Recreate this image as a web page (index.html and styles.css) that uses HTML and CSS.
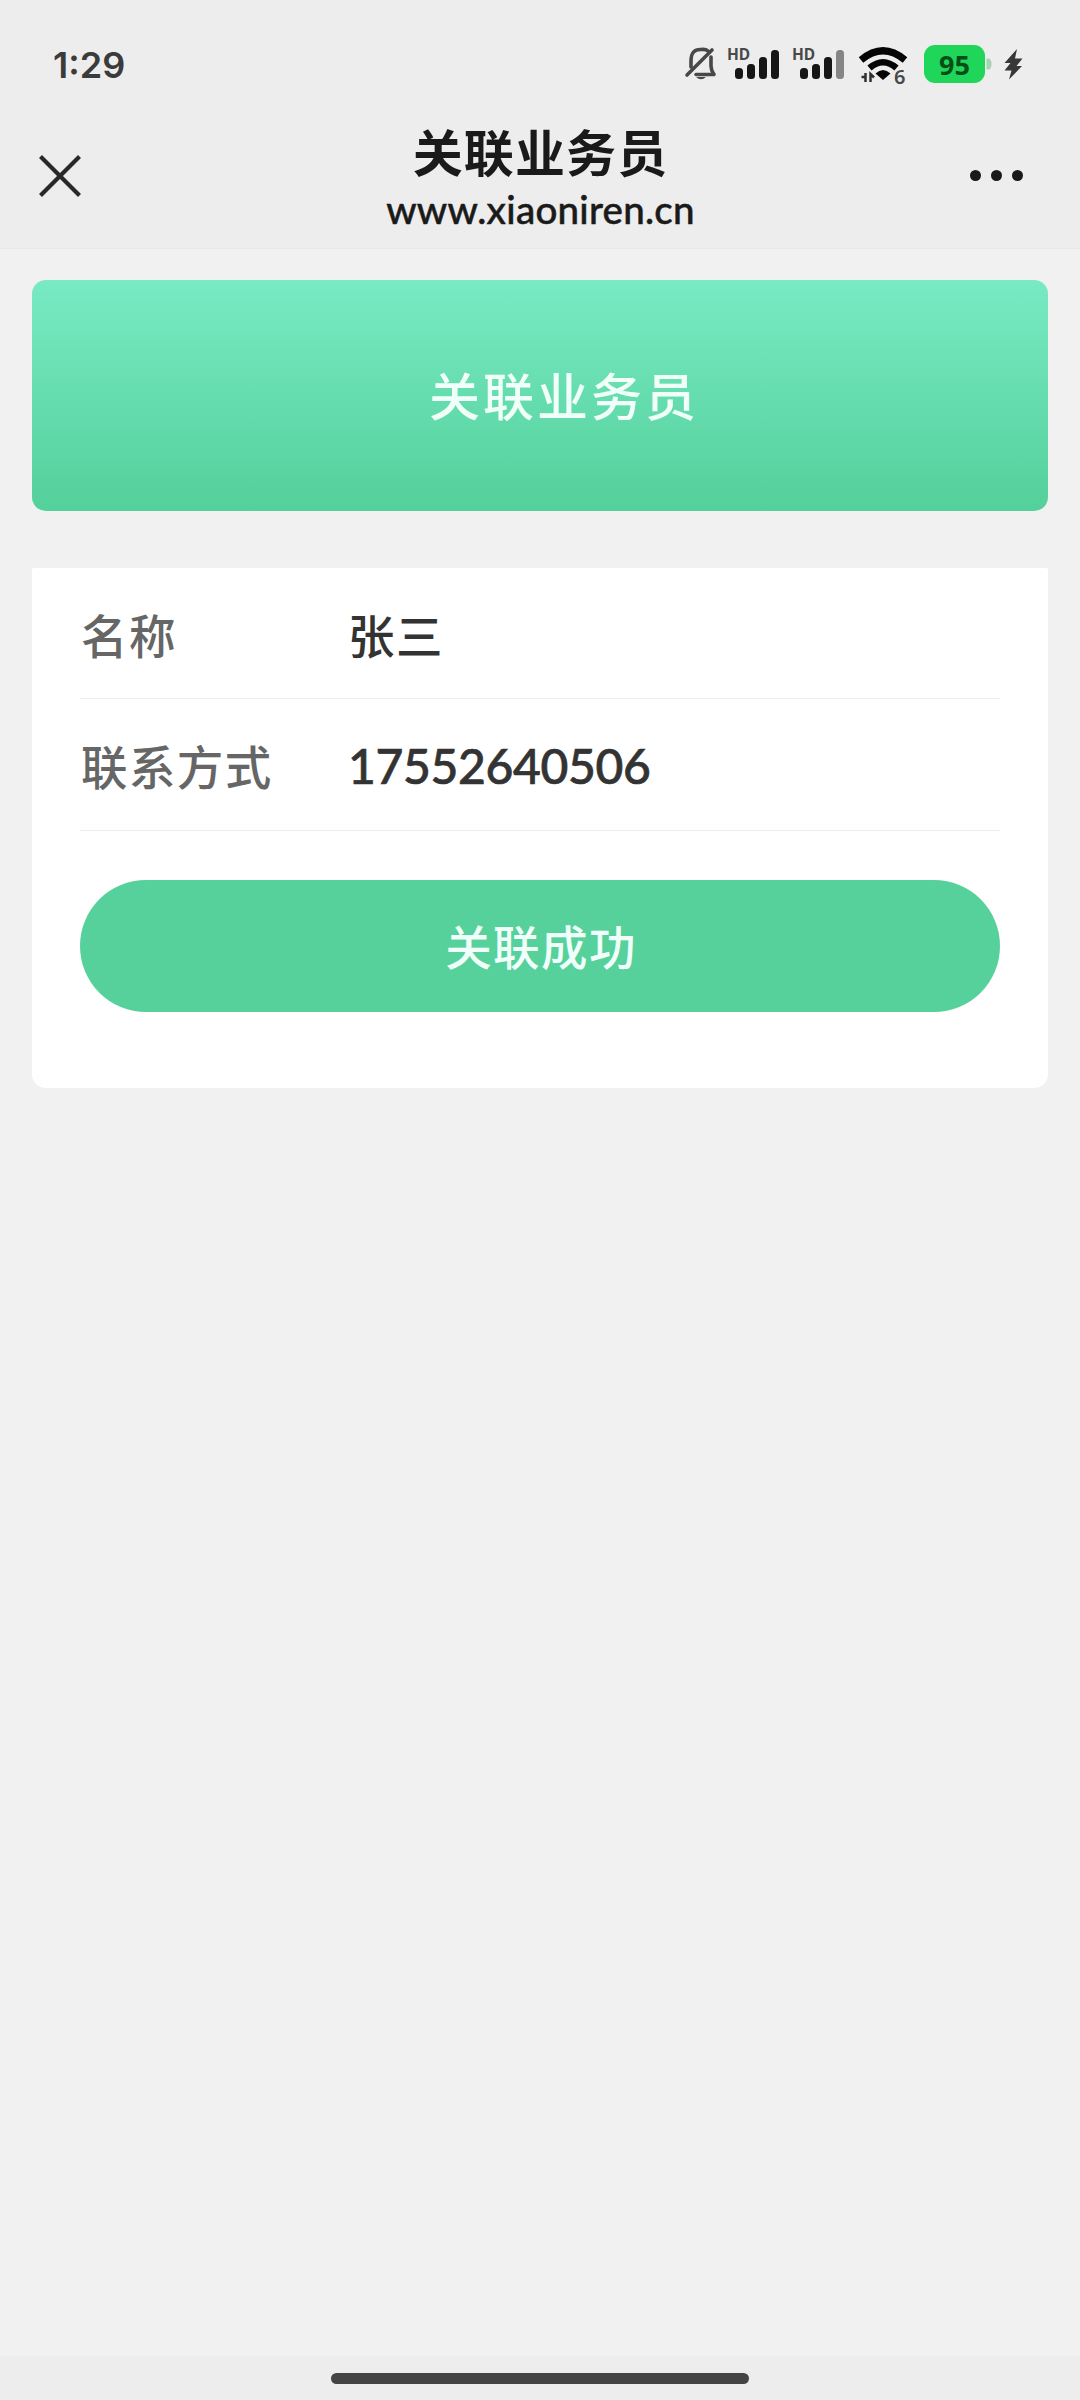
FILE: index.html
```html
<!DOCTYPE html>
<html lang="zh-CN">
<head>
<meta charset="utf-8">
<title>关联业务员</title>
<link rel="stylesheet" href="styles.css">
</head>
<body>
<div class="screen">
  <header class="top">
    <div class="status">
      <span class="time">1:29</span>
      <svg class="status-icons" width="380" height="60" viewBox="680 34 380 60">
        <g fill="none" stroke="#484848" stroke-width="3.6" stroke-linecap="round" stroke-linejoin="round">
          <path d="M687 75 L712 50"/>
          <path d="M691 67 V61 Q691 49 701 49.500 Q706 49 708 51"/>
          <path d="M711 57 V66 Q711 70 714 74.500 H696"/>
        </g>
        <path d="M696 77 H706 Q701 81.500 696 77Z" fill="#484848"/>
        <g class="hd"><text x="727" y="60">HD</text><text x="792" y="60">HD</text></g>
        <g fill="#161616">
          <rect x="735" y="68" width="8" height="11" rx="3.500"/><rect x="747" y="64" width="8" height="15" rx="3.500"/><rect x="759" y="57" width="8" height="22" rx="3.500"/><rect x="771" y="50" width="8" height="29" rx="3.500"/>
          <rect x="800" y="68" width="8" height="11" rx="3.500"/><rect x="812" y="64" width="8" height="15" rx="3.500"/><rect x="824" y="57" width="8" height="22" rx="3.500"/>
        </g>
        <rect x="836" y="50" width="8" height="29" rx="3.500" fill="#858585"/>
        <path d="M861 60 Q883 41.500 905 60" fill="none" stroke="#050505" stroke-width="7"/>
        <path d="M869.500 68 Q883 56.500 896.500 68" fill="none" stroke="#050505" stroke-width="6.500"/>
        <path d="M875.500 73.500 Q883 66.500 890.500 73.500 L883 80Z" fill="#050505"/>
        <path d="M861.500 77 H865.500 V73 M865.500 74 V82 M870.500 82 V74 L874 77.500" fill="none" stroke="#303030" stroke-width="2.500"/>
        <text class="gen" x="894" y="83.500">6</text>
        <rect x="924" y="45" width="61" height="38" rx="11" fill="#1fd65a"/>
        <path d="M986.500 58.500 H988 Q991.500 58.500 991.500 64 Q991.500 69.500 988 69.500 H986.500Z" fill="#a5d5b0"/>
        <text class="level" x="954.500" y="75">95</text>
        <path d="M1017 49 L1004.500 63 H1010.500 L1004.500 70.500 H1011.500 L1009 79.500 L1022 66 H1016.500 L1022.500 58.500 H1015Z" fill="#383838"/>
      </svg>
    </div>
    <nav class="nav">
      <svg class="close" width="44" height="44" viewBox="0 0 44 44"><path d="M2.500 2.500 L41.500 41.500 M41.500 2.500 L2.500 41.500" stroke="#292929" stroke-width="4.200"/></svg>
      <div class="heading">
        <h1 class="title">关联业务员</h1>
        <div class="url">www.xiaoniren.cn</div>
      </div>
      <div class="more"><i class="dot"></i><i class="dot"></i><i class="dot"></i></div>
    </nav>
  </header>
  <main class="content">
    <section class="banner">关联业务员</section>
    <section class="card">
      <div class="row"><span class="label">名称</span><span class="value">张三</span></div>
      <div class="row"><span class="label">联系方式</span><span class="value phone">17552640506</span></div>
      <button class="submit">关联成功</button>
    </section>
  </main>
  <footer class="gesture"><div class="handle"></div></footer>
</div>
</body>
</html>
```
FILE: styles.css
```css
* { box-sizing: border-box; }
body { margin: 0; background: #f1f1f1; font-family: "Noto Sans CJK SC", sans-serif; }
.screen { width: 1080px; height: 2400px; display: flex; flex-direction: column; }
.top { height: 249px; background: #ededed; border-bottom: 1px solid #e6e6e6; }
.status { height: 112px; padding: 34px 20px 0 53px; display: flex; justify-content: space-between; align-items: flex-start; }
.time { padding-top: 1px; font: 600 36px/60px Inter, sans-serif; color: #3b3b3b; }
.hd { font: 700 15.500px "Noto Sans", sans-serif; fill: #484848; }
.gen { font: 600 20px "Noto Sans", sans-serif; fill: #484848; }
.level { font: 700 27px "Noto Sans", sans-serif; fill: #064d18; text-anchor: middle; }
.nav { height: 136px; padding: 0 57px 0 38px; display: grid; grid-template-columns: 53px 1fr 53px; }
.close { margin-top: 42px; }
.heading { text-align: center; padding-left: 20px; }
.title { margin: 5px 0 0; font-size: 50px; line-height: 66px; font-weight: 700; letter-spacing: 1.100px; color: #1a1a1a; white-space: nowrap; }
.url { margin-top: 1px; font: 500 38.500px/50px Lato, sans-serif; letter-spacing: 0.250px; color: #1a1a1a; -webkit-text-stroke: 0.500px #1a1a1a; white-space: nowrap; }
.more { display: flex; justify-content: space-between; padding-top: 58px; }
.dot { width: 11px; height: 11px; border-radius: 50%; background: #191919; }
.content { flex: 1; padding: 31px 32px; }
.banner { height: 231px; border-radius: 14px; display: flex; align-items: center; justify-content: center; padding: 0 0 4px 48px; background: linear-gradient(#78eac4, #54d09a); color: #f0fff9; font-size: 51px; font-weight: 500; letter-spacing: 3px; }
.card { margin-top: 57px; height: 520px; padding: 0 48px; background: #fff; border-radius: 2px 2px 14px 14px; }
.row { height: 131px; border-bottom: 1px solid #ececec; display: flex; align-items: center; font-size: 46.500px; font-weight: 500; letter-spacing: 1.400px; color: #333; }
.row + .row { height: 132px; }
.label { width: 267px; padding-left: 1px; color: #666; }
.value { padding-left: 1px; }
.phone { padding-top: 2px; font-family: Lato, sans-serif; font-size: 48px; letter-spacing: -0.350px; -webkit-text-stroke: 0.700px currentColor; }
.submit { display: block; width: 100%; height: 132px; margin-top: 49px; padding: 0 0 4px 2px; border: 0; border-radius: 66px; background: #56d19b; color: #f0fff9; font: 500 46.500px "Noto Sans CJK SC", sans-serif; letter-spacing: 1.400px; }
.gesture { height: 44px; padding-top: 17px; background: #ededed; display: flex; justify-content: center; }
.handle { width: 418px; height: 11px; border-radius: 6px; background: #444; }
```
